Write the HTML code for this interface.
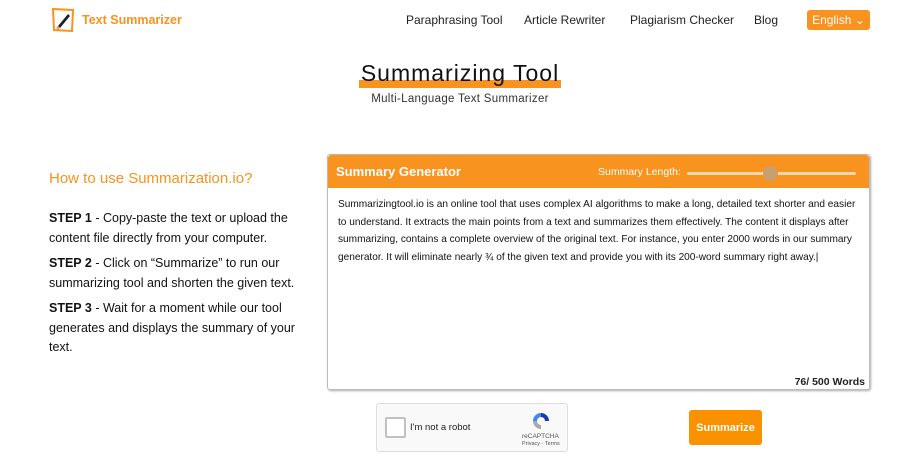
<!DOCTYPE html>
<html><head><style>
body{margin:0;width:900px;height:460px;background:#fff;font-family:"Liberation Sans",sans-serif;position:relative;overflow:hidden;color:#111}
.a{position:absolute;white-space:nowrap}
.nav{font-size:12px;color:#222;top:13px}
</style></head><body>
<svg class="a" style="left:51px;top:7px" width="24" height="26" viewBox="0 0 24 26"><path d="M2 2 L22 3 L21 24 L3 23 Z" fill="none" stroke="#f7931e" stroke-width="2"/><path d="M7 19 L17 7 L19 9 L9 21 Z" fill="#222"/><path d="M6 20 l2 2" stroke="#f7931e" stroke-width="2"/></svg>
<div class="a" style="left:82px;top:13px;font-size:12.5px;font-weight:bold;color:#f7931e">Text Summarizer</div>
<div class="a nav" style="left:406px">Paraphrasing Tool</div>
<div class="a nav" style="left:524px">Article Rewriter</div>
<div class="a nav" style="left:630px">Plagiarism Checker</div>
<div class="a nav" style="left:754px">Blog</div>
<div class="a" style="left:807px;top:10px;width:63px;height:20px;background:#f7931e;border-radius:3px;color:#fff;font-size:12px;line-height:20px;text-align:center">English ⌄</div>
<div class="a" style="left:359px;top:80px;width:202px;height:8px;background:#f7931e"></div>
<div class="a" style="left:340px;top:60px;width:240px;text-align:center;font-size:23px;letter-spacing:1px;color:#111">Summarizing Tool</div>
<div class="a" style="left:340px;top:93px;width:240px;text-align:center;font-size:11.5px;color:#333;letter-spacing:.3px">Multi-Language Text Summarizer</div>
<div class="a" style="left:49px;top:170px;font-size:15px;color:#f7931e">How to use Summarization.io?</div>
<div class="a" style="left:49px;top:209px;width:260px;white-space:normal;font-size:12.5px;line-height:19.5px;color:#111">
<div><b>STEP 1</b> - Copy-paste the text or upload the content file directly from your computer.</div>
<div style="margin-top:6px"><b>STEP 2</b> - Click on “Summarize” to run our summarizing tool and shorten the given text.</div>
<div style="margin-top:6px"><b>STEP 3</b> - Wait for a moment while our tool generates and displays the summary of your text.</div>
</div>
<div class="a" style="left:327px;top:154px;width:541px;height:234px;border:1px solid #bbb;border-radius:3px;box-shadow:1px 1px 2px #aaa"></div>
<div class="a" style="left:328px;top:155px;width:541px;height:33px;background:#f7931e;border-radius:3px 3px 0 0"></div>
<div class="a" style="left:336px;top:164px;font-size:13px;font-weight:bold;color:#fff">Summary Generator</div>
<div class="a" style="left:598px;top:166px;font-size:10.5px;color:#fff">Summary Length:</div>
<div class="a" style="left:687px;top:172px;width:169px;height:3px;background:#f3d7b0;border-radius:2px"></div>
<div class="a" style="left:763px;top:166px;width:15px;height:15px;background:#c7a06e;border-radius:50%"></div>
<div class="a" style="left:338px;top:196px;font-size:10.1px;line-height:17.5px;color:#111">Summarizingtool.io is an online tool that uses complex AI algorithms to make a long, detailed text shorter and easier<br>to understand. It extracts the main points from a text and summarizes them effectively. The content it displays after<br>summarizing, contains a complete overview of the original text. For instance, you enter 2000 words in our summary<br>generator. It will eliminate nearly ¾ of the given text and provide you with its 200-word summary right away.|</div>
<div class="a" style="left:770px;top:376px;width:95px;text-align:right;font-size:10.5px;font-weight:bold;color:#222">76/ 500 Words</div>
<div class="a" style="left:376px;top:403px;width:190px;height:47px;border:1px solid #ddd;border-radius:3px;background:#f9f9f9"></div>
<div class="a" style="left:385px;top:417px;width:17px;height:17px;border:2px solid #c1c1c1;border-radius:2px;background:#fff"></div>
<div class="a" style="left:410px;top:422px;font-size:9.5px;color:#222">I'm not a robot</div>
<svg class="a" style="left:531px;top:411px" width="20" height="20" viewBox="0 0 20 20"><path d="M10 2 A8 8 0 0 1 18 10 L14 10 A4 4 0 0 0 10 6Z" fill="#1c3aa9"/><path d="M2 10 A8 8 0 0 1 10 2 L10 6 A4 4 0 0 0 6 10Z" fill="#4285f4"/><path d="M10 18 A8 8 0 0 1 2 10 L6 10 A4 4 0 0 0 10 14Z" fill="#aaa"/></svg>
<div class="a" style="left:522px;top:433px;font-size:6.5px;color:#555">reCAPTCHA</div>
<div class="a" style="left:522px;top:441px;font-size:5.5px;color:#555">Privacy - Terms</div>
<div class="a" style="left:689px;top:410px;width:73px;height:35px;background:#fa9200;border-radius:3px;color:#fff;font-weight:bold;font-size:11px;line-height:37px;text-align:center">Summarize</div>
</body></html>
